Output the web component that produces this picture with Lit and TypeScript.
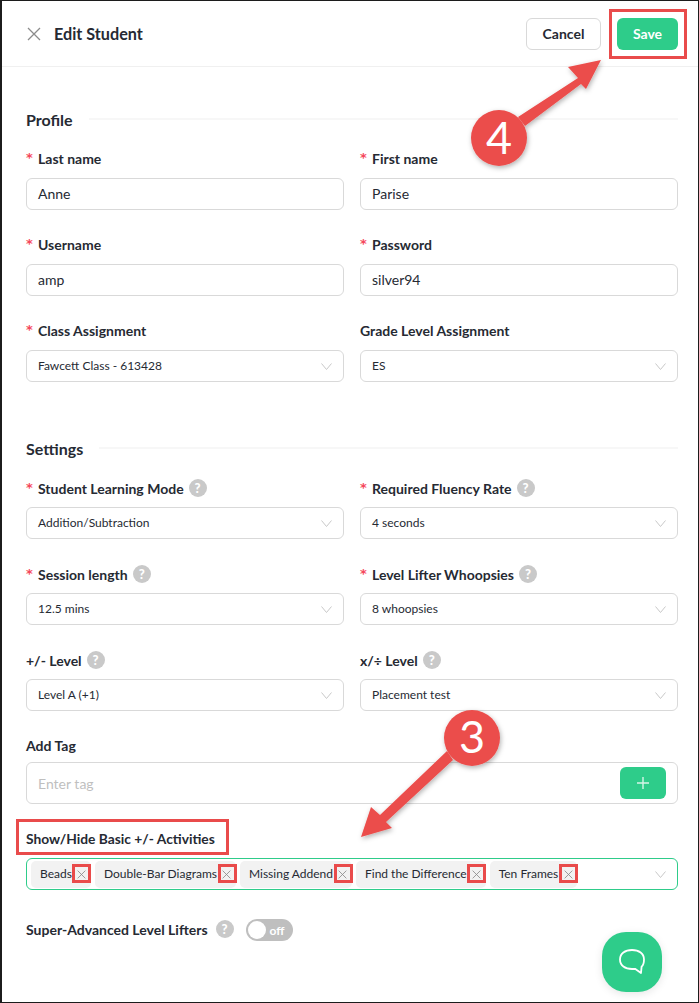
import { LitElement, html, css, svg } from "lit";
import { customElement } from "lit/decorators.js";

const chevron = html`<svg class="chev" width="11" height="7" viewBox="0 0 11 7"><path d="M.5.500l5 6 5-6" fill="none" stroke="#c8c8c8" stroke-width="1"/></svg>`;
const x = (s: number, c: string) => html`<svg width="${s}" height="${s}" viewBox="0 0 14 14"><path d="M1 1l12 12M13 1L1 13" fill="none" stroke="${c}" stroke-width="1.300"/></svg>`;

@customElement("app-root")
export class AppRoot extends LitElement {
  static styles = css`
    :host { display: block; position: relative; width: 699px; height: 1003px; box-sizing: border-box; overflow: hidden; background: #fff;
      border-style: solid; border-color: #1c1c1c; border-width: 1px 1px 1px 2px; font-family: Lato, sans-serif; color: #262a33; }
    .head { height: 66px; box-sizing: border-box; border-bottom: 1px solid #f0f0f0; display: flex; align-items: center; padding: 0 20px 0 25px; }
    .head .close { display: flex; margin-right: 13px; }
    .head h1 { font-size: 16.2px; font-weight: 700; margin: 0; flex: 1; }
    .btn { height: 32px; box-sizing: border-box; border-radius: 6px; font-size: 14px; font-weight: 700; display: flex; align-items: center; justify-content: center; }
    .cancel { width: 75px; border: 1px solid #d9d9d9; margin-right: 16px; }
    .save { width: 61px; background: #2ecc8a; color: #fff; }
    .body { padding: 0 20px 0 24px; }
    .sect { display: flex; align-items: center; font-size: 16px; font-weight: 700; height: 20px; box-sizing: border-box; padding-bottom: 2px; }
    .sect::after { content: ""; flex: 1; height: 2px; background: #f7f7f7; margin-left: 16px; }
    .s1 { margin-top: 43px; }
    .s2 { margin-top: 57px; }
    .grid { display: grid; grid-template-columns: 318px 318px; column-gap: 16px; row-gap: 25px; margin-top: 19px; }
    .lab { height: 20px; box-sizing: border-box; padding-bottom: 2px; margin-bottom: 9px; font-size: 14px; font-weight: 700; display: flex; align-items: center; color: #262a33; }
    .settings .lab { padding-bottom: 0; }
    .star { color: #f5475b; width: 12px; font-size: 13px; line-height: 14px; font-family: "DejaVu Sans", sans-serif; }
    .q { width: 18px; height: 18px; border-radius: 50%; background: #c9c9c9; color: #fff; font-size: 13px; font-weight: 900; display: inline-flex; align-items: center; justify-content: center; margin-left: 5px; }
    .inp { height: 32px; box-sizing: border-box; border: 1px solid #d9d9d9; border-radius: 6px; display: flex; align-items: center; justify-content: space-between; padding: 0 11px 2px 11px; font-size: 14px; }
    .sel { font-size: 12px; }
    .chev { flex: none; margin-top: 2px; }
    .taglab { margin-top: 25px; margin-bottom: 6px; }
    .taginp { height: 42px; box-sizing: border-box; border: 1px solid #d9d9d9; border-radius: 6px; display: flex; align-items: center; justify-content: space-between; padding: 0 11px; font-size: 14px; color: #bfbfbf; }
    .plus { width: 46px; height: 32px; background: #2ecc8a; border-radius: 6px; display: flex; align-items: center; justify-content: center; }
    .showlab { margin-top: 24px; margin-bottom: 10px; padding-bottom: 0; font-size: 13.8px; }
    .tags { height: 32px; box-sizing: border-box; border: 1px solid #2ecc8a; border-radius: 6px; display: flex; align-items: center; padding: 0 11px 0 4px; gap: 4px; font-size: 12px; }
    .tag { height: 27px; background: #f2f2f2; border-radius: 5px; display: flex; align-items: center; padding: 0 4px 0 9px; }
    .tag span { margin-bottom: 2px; }
    .tag svg { margin: 0 .5px 0 5.500px; }
    .tags .chev { margin-left: auto; margin-top: 0; }
    .sw { display: flex; align-items: center; margin-top: 27px; font-size: 14px; font-weight: 700; height: 24px; }
    .sw .q { margin-left: 8px; }
    .toggle { width: 47px; height: 22px; margin: 2px 0 0 12px; background: #bfbfbf; border-radius: 11px; display: flex; align-items: center; padding: 0 2px; box-sizing: border-box; color: #fff; font-size: 12px; font-weight: 700; gap: 4px; }
    .knob { width: 18px; height: 18px; border-radius: 50%; background: #fff; }
    .chat { position: absolute; left: 600px; top: 931px; width: 60px; height: 60px; border-radius: 24px; background: #2ecc8a; box-shadow: 0 2px 8px rgba(0,0,0,.1); display: flex; align-items: center; justify-content: center; }
    .anno { position: absolute; left: -2px; top: -1px; width: 699px; height: 1003px; pointer-events: none; }
    .num { font-family: Lato, sans-serif; font-size: 45px; font-weight: 400; fill: #fff; text-anchor: middle; }
  `;

  field(label: string, value: string, opts: { req?: boolean; sel?: boolean; q?: boolean } = {}) {
    return html`<div>
      <div class="lab">${opts.req ? html`<span class="star">*</span>` : ""}${label}${opts.q ? html`<span class="q">?</span>` : ""}</div>
      <div class="inp ${opts.sel ? "sel" : ""}"><span>${value}</span>${opts.sel ? chevron : ""}</div>
    </div>`;
  }

  render() {
    const tags = ["Beads", "Double-Bar Diagrams", "Missing Addend", "Find the Difference", "Ten Frames"];
    const boxes = [73.5, 219.5, 335.5, 468.5, 560.5];
    return html`
      <div class="head">
        <span class="close">${x(14, "#8c8c8c")}</span>
        <h1>Edit Student</h1>
        <div class="btn cancel">Cancel</div>
        <div class="btn save">Save</div>
      </div>
      <div class="body">
        <div class="sect s1">Profile</div>
        <div class="grid">
          ${this.field("Last name", "Anne", { req: true })}
          ${this.field("First name", "Parise", { req: true })}
          ${this.field("Username", "amp", { req: true })}
          ${this.field("Password", "silver94", { req: true })}
          ${this.field("Class Assignment", "Fawcett Class - 613428", { req: true, sel: true })}
          ${this.field("Grade Level Assignment", "ES", { sel: true })}
        </div>
        <div class="sect s2">Settings</div>
        <div class="grid settings">
          ${this.field("Student Learning Mode", "Addition/Subtraction", { req: true, sel: true, q: true })}
          ${this.field("Required Fluency Rate", "4 seconds", { req: true, sel: true, q: true })}
          ${this.field("Session length", "12.5 mins", { req: true, sel: true, q: true })}
          ${this.field("Level Lifter Whoopsies", "8 whoopsies", { req: true, sel: true, q: true })}
          ${this.field("+/- Level", "Level A (+1)", { sel: true, q: true })}
          ${this.field("x/÷ Level", "Placement test", { sel: true, q: true })}
        </div>
        <div class="lab taglab">Add Tag</div>
        <div class="taginp"><span>Enter tag</span><span class="plus"><svg width="14" height="14" viewBox="0 0 14 14"><path d="M7 1v12M1 7h12" stroke="#d5f5e8" stroke-width="1.400" fill="none"/></svg></span></div>
        <div class="lab showlab">Show/Hide Basic +/- Activities</div>
        <div class="tags">
          ${tags.map((t) => html`<div class="tag"><span>${t}</span>${x(9, "#8a8a8a")}</div>`)}
          ${chevron}
        </div>
        <div class="sw">Super-Advanced Level Lifters<span class="q">?</span><div class="toggle"><span class="knob"></span><span>off</span></div></div>
      </div>
      <div class="chat"><svg width="30" height="28" viewBox="0 0 30 28"><path d="M15 2C8 2 3 5.500 3 11.500S8 21 15 21c1 0 2 0 3-.2L24 25l.6-6.300C26.500 17 27 14.500 27 11.500 27 5.500 22 2 15 2z" fill="none" stroke="#fff" stroke-width="1.800" stroke-linejoin="round"/></svg></div>
      <svg class="anno" viewBox="0 0 699 1003">
        <defs><filter id="sh" x="-20%" y="-20%" width="150%" height="150%"><feDropShadow dx="1" dy="2" stdDeviation="2.500" flood-color="#000" flood-opacity=".3"/></filter></defs>
        <g fill="none" stroke="#e94b4b" stroke-width="3">
          <rect x="610.500" y="10.500" width="75" height="47"/>
          <rect x="17.500" y="820.500" width="210" height="33"/>
          ${boxes.map((b) => svg`<rect x="${b}" y="865.500" width="16" height="16"/>`)}
        </g>
        <g fill="#eb4d4b" filter="url(#sh)">
          <path d="M601 60L568 67 578 78 518 117 525 126 581 84 586 89z"/>
          <circle cx="499" cy="138" r="28"/>
          <path d="M361 837L371 807 380 815 447 751 453 760 386 822 392 828z"/>
          <circle cx="472" cy="738" r="28"/>
        </g>
        <text class="num" x="499" y="154">4</text>
        <text class="num" x="472" y="753">3</text>
      </svg>
    `;
  }
}
